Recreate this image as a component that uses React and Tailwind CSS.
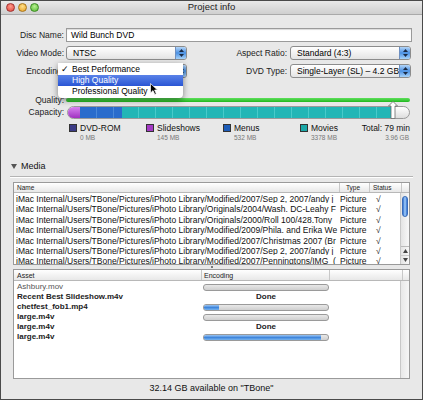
import React from 'react';

const files = [
  'iMac Internal/Users/TBone/Pictures/iPhoto Library/Modified/2007/Sep 2, 2007/andy j',
  'iMac Internal/Users/TBone/Pictures/iPhoto Library/Originals/2004/Wash. DC-Leahy F',
  'iMac Internal/Users/TBone/Pictures/iPhoto Library/Originals/2000/Roll 100/428.Tony',
  'iMac Internal/Users/TBone/Pictures/iPhoto Library/Modified/2009/Phila. and Erika We',
  'iMac Internal/Users/TBone/Pictures/iPhoto Library/Modified/2007/Christmas 2007 (Br',
  'iMac Internal/Users/TBone/Pictures/iPhoto Library/Modified/2007/Sep 2, 2007/andy j',
  'iMac Internal/Users/TBone/Pictures/iPhoto Library/Modified/2007/Penningtons/IMG_(',
];

const assets = [
  { name: 'Ashbury.mov', light: true, progress: 0 },
  { name: 'Recent Best Slideshow.m4v', done: true },
  { name: 'chetfest_fob1.mp4', progress: 12 },
  { name: 'large.m4v', progress: 0 },
  { name: 'large.m4v', done: true },
  { name: 'large.m4v', progress: 94 },
];

const legend = [
  { name: 'DVD-ROM', size: '0 MB', color: 'bg-[#3b3b86]' },
  { name: 'Slideshows', size: '145 MB', color: 'bg-[#a43ac4]' },
  { name: 'Menus', size: '532 MB', color: 'bg-[#1d5cb8]' },
  { name: 'Movies', size: '3378 MB', color: 'bg-[#1ba7a7]' },
];

const Arrows = () => (
  <svg width="7" height="10" viewBox="0 0 7 10">
    <path d="M3.5 1 L6 4 H1 Z" fill="#1a2a44" />
    <path d="M3.5 9 L6 6 H1 Z" fill="#1a2a44" />
  </svg>
);

const Select = ({ label }) => (
  <div className="flex h-[14px] w-[121px] items-stretch overflow-hidden rounded-[3px] border border-[#8c8c8c] bg-gradient-to-b from-white to-[#e4e4e4]">
    <span className="flex flex-1 items-center overflow-hidden whitespace-nowrap pl-[6px] text-[8.5px] leading-none text-black">{label}</span>
    <div className="flex w-[11px] shrink-0 items-center justify-center border-l border-[#6d8fc0] bg-gradient-to-b from-[#b4d6f8] via-[#4a90e2] to-[#a8d4fa]">
      <Arrows />
    </div>
  </div>
);

const Label = ({ children, className = '' }) => (
  <span className={`whitespace-nowrap text-right text-[8.5px] leading-none text-[#222] ${className}`}>{children}</span>
);

const Progress = ({ value }) => (
  <div className="h-[7px] w-[126px] overflow-hidden rounded-[3px] border border-[#9a9a9a] bg-gradient-to-b from-[#e8e8e8] to-[#cfcfcf]">
    <div
      className="h-full bg-gradient-to-b from-[#9cc6f2] via-[#3f86dc] to-[#78b4ee]"
      style={{ width: `${value}%` }}
    />
  </div>
);

export default function App() {
  return (
    <div className="relative h-[400px] w-[423px] overflow-hidden border border-[#4a4a4a] bg-[#e8e8e8] font-['Liberation_Sans',Arial,sans-serif]">
      {/* title bar */}
      <div className="relative flex h-[14px] items-center border-b border-[#a9a9a9] bg-gradient-to-b from-[#e9e9e9] to-[#cfcfcf]">
        <div className="flex gap-[3px] pl-[5px]">
          <span className="h-[9px] w-[9px] rounded-full border border-[#a03030] bg-[radial-gradient(circle_at_50%_35%,#ff9a8a,#e0443a)]" />
          <span className="h-[9px] w-[9px] rounded-full border border-[#a87418] bg-[radial-gradient(circle_at_50%_35%,#ffe08a,#e8a020)]" />
          <span className="h-[9px] w-[9px] rounded-full border border-[#3c8a22] bg-[radial-gradient(circle_at_50%_35%,#b8f090,#52b830)]" />
        </div>
        <span className="absolute left-0 right-0 text-center text-[9.5px] text-[#222]">Project info</span>
      </div>

      {/* form */}
      <div className="relative flex flex-col pt-[13px]">
        <div className="flex h-[14px] items-center">
          <Label className="w-[63px]">Disc Name:</Label>
          <div className="ml-[2px] flex h-[14px] w-[346px] items-center border border-[#9a9a9a] bg-white pl-[4px] text-[8.5px] leading-none text-black shadow-[inset_0_1px_1px_rgba(0,0,0,0.15)]">
            Wild Bunch DVD
          </div>
        </div>
        <div className="mt-[4px] flex h-[14px] items-center">
          <Label className="w-[63px]">Video Mode:</Label>
          <div className="ml-[2px]"><Select label="NTSC" /></div>
          <Label className="flex-1 pr-[3px]">Aspect Ratio:</Label>
          <div className="mr-[11px]"><Select label="Standard (4:3)" /></div>
        </div>
        <div className="mt-[4px] flex h-[14px] items-center">
          <Label className="w-[63px]">Encoding:</Label>
          <div className="ml-[2px]"><Select label="High Quality" /></div>
          <Label className="flex-1 pr-[3px]">DVD Type:</Label>
          <div className="mr-[11px]"><Select label="Single-Layer (SL) – 4.2 GB" /></div>
        </div>

        <div className="mt-[19px] flex h-[6px] items-center">
          <Label className="w-[63px]">Quality:</Label>
          <div className="ml-[2px] mr-[12px] h-[4px] flex-1 rounded-full bg-gradient-to-b from-[#5de05a] to-[#1cb81c]" />
        </div>
        <div className="mt-[3px] flex h-[13px] items-center">
          <Label className="w-[63px]">Capacity:</Label>
          <div className="relative ml-[3px] mr-[12px] flex h-[13px] flex-1 overflow-hidden rounded-full border border-[#9a9a9a] bg-gradient-to-b from-white to-[#dedede]">
            <div className="w-[12px] bg-gradient-to-b from-[#d880f0] to-[#a02fc0]" />
            <div className="w-[42px] bg-[repeating-linear-gradient(90deg,#2a6ccc_0px,#2a6ccc_16px,#4a88d8_16px,#4a88d8_17px)]" />
            <div className="w-[272px] bg-[repeating-linear-gradient(90deg,#22b6b6_0px,#22b6b6_16px,#48caca_16px,#48caca_17px)]" />
          </div>
          <svg className="absolute left-[387px] top-[86px]" width="10" height="18" viewBox="0 0 10 18">
            <path d="M5 0.5 L9.5 5 H7 V17.5 H3 V5 H0.5 Z" fill="white" stroke="#6a6a6a" strokeWidth="0.8" />
          </svg>
        </div>

        {/* legend */}
        <div className="mt-[4px] flex pl-[68px] pr-[12px]">
          {legend.map((l, i) => (
            <div key={l.name} className={`flex gap-[3px] ${i < 3 ? 'w-[77px]' : 'flex-1'}`}>
              <span className={`mt-[1px] h-[8px] w-[8px] border border-[#333] ${l.color}`} />
              <div className="flex flex-col">
                <span className="whitespace-nowrap text-[8.5px] leading-[10px] text-[#111]">{l.name}</span>
                <span className="whitespace-nowrap text-[6.5px] leading-[10px] text-[#777]">{l.size}</span>
              </div>
            </div>
          ))}
          <div className="flex shrink-0 flex-col items-end">
            <span className="whitespace-nowrap text-[8.5px] leading-[10px] text-[#111]">Total: 79 min</span>
            <span className="whitespace-nowrap pr-[1px] text-[6.5px] leading-[10px] text-[#777]">3.96 GB</span>
          </div>
        </div>

        {/* popup menu */}
        <div className="absolute left-[57px] top-[48px] w-[125px] rounded-b-[4px] bg-white py-[1px] text-[8.5px] leading-none shadow-[0_2px_6px_rgba(0,0,0,0.45)]">
          <div className="flex h-[11px] items-center text-black">
            <span className="w-[14px] pl-[3px]">✓</span>Best Performance
          </div>
          <div className="flex h-[11px] items-center bg-gradient-to-b from-[#5a82e8] to-[#2a55d4] text-white">
            <span className="w-[14px]" />High Quality
          </div>
          <div className="flex h-[11px] items-center text-black">
            <span className="w-[14px]" />Professional Quality
          </div>
          <svg className="absolute left-[92px] top-[20px]" width="8" height="12" viewBox="0 0 8 12">
            <path d="M0.5 0.5 V10 L3 7.6 L4.8 11.5 L6.3 10.8 L4.6 7 H7.5 Z" fill="black" stroke="white" strokeWidth="0.7" />
          </svg>
        </div>
      </div>

      {/* media disclosure */}
      <div className="mt-[19px] flex items-center gap-[4px] pl-[10px]">
        <svg width="6" height="5" viewBox="0 0 6 5"><path d="M0 0 H6 L3 5 Z" fill="#555" /></svg>
        <span className="text-[9px] leading-none text-[#111]">Media</span>
      </div>
      <div className="mx-[9px] mt-[5px] h-[2px] border-t border-b border-t-[#b4b4b4] border-b-white" />

      {/* files table */}
      <div className="mx-[12px] mt-[4px] flex h-[83px] flex-col border border-[#9a9a9a] bg-white">
        <div className="flex h-[10px] border-b border-[#b8b8b8] bg-gradient-to-b from-white to-[#e8e8e8] text-[6.5px] leading-[10px] text-[#222]">
          <span className="w-[326px] shrink-0 border-r border-[#c8c8c8] pl-[3px]">Name</span>
          <span className="w-[30px] shrink-0 border-r border-[#c8c8c8] pl-[6px]">Type</span>
          <span className="w-[32px] shrink-0 border-r border-[#c8c8c8] pl-[3px]">Status</span>
          <span className="flex-1" />
        </div>
        <div className="flex flex-1 overflow-hidden">
          <div className="flex flex-1 flex-col overflow-hidden pt-[1px]">
            {files.map((f, i) => (
              <div key={i} className="flex h-[10.4px] shrink-0 items-center text-[8.5px] leading-none text-[#111]">
                <span className="w-[324px] shrink-0 overflow-hidden whitespace-nowrap pl-[2px]">{f}</span>
                <span className="w-[32px] shrink-0 overflow-hidden pl-[2px]">Picture</span>
                <span className="w-[32px] shrink-0 pl-[6px]">√</span>
              </div>
            ))}
          </div>
          <div className="flex w-[9px] shrink-0 flex-col border-l border-[#c8c8c8] bg-gradient-to-r from-[#e4e4e4] to-[#f8f8f8]">
            <div className="mx-auto mt-[3px] h-[21px] w-[6px] rounded-full border border-[#3a6cb8] bg-gradient-to-r from-[#2e6fd0] via-[#a8d0f8] to-[#2e6fd0]" />
            <div className="flex-1" />
            <div className="flex h-[9px] items-center justify-center border-t border-[#bbb]">
              <svg width="5" height="4" viewBox="0 0 5 4"><path d="M2.5 0 L5 4 H0 Z" fill="#444" /></svg>
            </div>
            <div className="flex h-[9px] items-center justify-center border-t border-[#ccc]">
              <svg width="5" height="4" viewBox="0 0 5 4"><path d="M0 0 H5 L2.5 4 Z" fill="#444" /></svg>
            </div>
          </div>
        </div>
      </div>

      {/* splitter */}
      <div className="flex h-[4px] items-center justify-center">
        <span className="h-[2px] w-[2px] rounded-full bg-[#555]" />
      </div>

      {/* assets table */}
      <div className="mx-[12px] flex h-[110px] flex-col border border-[#9a9a9a] bg-white">
        <div className="flex h-[11px] border-b border-[#b8b8b8] bg-gradient-to-b from-white to-[#e8e8e8] text-[7px] leading-[11px] text-[#222]">
          <span className="w-[188px] border-r border-[#c8c8c8] pl-[3px]">Asset</span>
          <span className="w-[128px] border-r border-[#c8c8c8] pl-[2px]">Encoding</span>
          <span className="w-[73px] border-r border-[#c8c8c8]" />
          <span className="flex-1" />
        </div>
        <div className="flex flex-1">
          <div className="flex flex-1 flex-col pt-[1px]">
            {assets.map((a, i) => (
              <div key={i} className="flex h-[10px] items-center text-[8px] leading-none">
                <span className={`w-[188px] pl-[3px] ${a.light ? 'text-[#555]' : 'font-semibold text-[#222]'}`}>{a.name}</span>
                <div className="flex w-[128px] justify-center">
                  {a.done ? (
                    <span className="font-semibold text-[#222]">Done</span>
                  ) : (
                    <Progress value={a.progress} />
                  )}
                </div>
              </div>
            ))}
          </div>
          <div className="w-[9px] border-l border-[#c8c8c8] bg-gradient-to-r from-[#e8e8e8] to-[#f6f6f6]" />
        </div>
      </div>

      {/* footer */}
      <div className="mt-[5px] text-center text-[9px] leading-none text-[#111]">32.14 GB available on "TBone"</div>
    </div>
  );
}
